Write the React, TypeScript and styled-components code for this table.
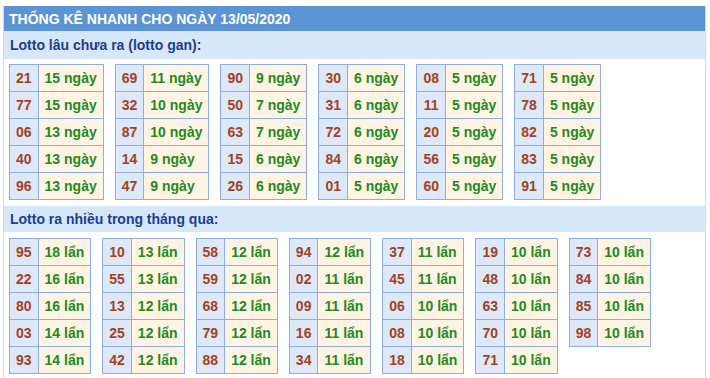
import React from "react";
import styled, { createGlobalStyle } from "styled-components";

const GlobalStyle = createGlobalStyle`
  body {
    margin: 0;
    background: #ffffff;
    font-family: "Liberation Sans", Arial, sans-serif;
  }
`;

const Frame = styled.div`
  margin: 6px 0 0 3px;
  width: 701px;
  border: 1px solid #cdd9e8;
  border-top: none;
  border-bottom: none;
`;

const Header = styled.div`
  height: 25px;
  line-height: 26px;
  padding-left: 5px;
  background-color: #5b93d5;
  color: #ffffff;
  font-size: 14px;
  font-weight: bold;
`;

const SubHeader = styled.div<{ h: number }>`
  height: ${(p) => p.h}px;
  line-height: ${(p) => p.h}px;
  padding-left: 6px;
  background-color: #d6e7fa;
  color: #1c3e92;
  font-size: 14px;
  font-weight: bold;
`;

const TableRow = styled.div<{ top: number; bottom: number }>`
  display: flex;
  align-items: flex-start;
  gap: 11px;
  padding: ${(p) => p.top}px 5px ${(p) => p.bottom}px 5px;
`;

const Table = styled.table`
  border-collapse: collapse;
  font-size: 14px;
  font-weight: bold;
`;

const NumCell = styled.td`
  height: 26px;
  padding: 0 6px;
  border: 1px solid #8eaee0;
  background-color: #dde8f8;
  color: #a3421f;
  text-align: center;
`;

const ValueCell = styled.td`
  height: 26px;
  padding: 0 6px;
  border: 1px solid #8eaee0;
  background-color: #fff4e3;
  color: #228a22;
  white-space: nowrap;
`;

type Entry = [string, number];

const ganTables: Entry[][] = [
  [["21", 15], ["77", 15], ["06", 13], ["40", 13], ["96", 13]],
  [["69", 11], ["32", 10], ["87", 10], ["14", 9], ["47", 9]],
  [["90", 9], ["50", 7], ["63", 7], ["15", 6], ["26", 6]],
  [["30", 6], ["31", 6], ["72", 6], ["84", 6], ["01", 5]],
  [["08", 5], ["11", 5], ["20", 5], ["56", 5], ["60", 5]],
  [["71", 5], ["78", 5], ["82", 5], ["83", 5], ["91", 5]],
];

const hotTables: Entry[][] = [
  [["95", 18], ["22", 16], ["80", 16], ["03", 14], ["93", 14]],
  [["10", 13], ["55", 13], ["13", 12], ["25", 12], ["42", 12]],
  [["58", 12], ["59", 12], ["68", 12], ["79", 12], ["88", 12]],
  [["94", 12], ["02", 11], ["09", 11], ["16", 11], ["34", 11]],
  [["37", 11], ["45", 11], ["06", 10], ["08", 10], ["18", 10]],
  [["19", 10], ["48", 10], ["63", 10], ["70", 10], ["71", 10]],
  [["73", 10], ["84", 10], ["85", 10], ["98", 10]],
];

const StatTable = ({ rows, unit }: { rows: Entry[]; unit: string }) => (
  <Table>
    <tbody>
      {rows.map(([num, count]) => (
        <tr key={num}>
          <NumCell>{num}</NumCell>
          <ValueCell>
            {count} {unit}
          </ValueCell>
        </tr>
      ))}
    </tbody>
  </Table>
);

const App: React.FC = () => {
  return (
    <>
      <GlobalStyle />
      <Frame>
        <Header>THỐNG KÊ NHANH CHO NGÀY 13/05/2020</Header>

        <SubHeader h={28}>Lotto lâu chưa ra (lotto gan):</SubHeader>
        <TableRow top={5} bottom={6}>
          {ganTables.map((rows, i) => (
            <StatTable key={i} rows={rows} unit="ngày" />
          ))}
        </TableRow>

        <SubHeader h={26}>Lotto ra nhiều trong tháng qua:</SubHeader>
        <TableRow top={6} bottom={4}>
          {hotTables.map((rows, i) => (
            <StatTable key={i} rows={rows} unit="lẩn" />
          ))}
        </TableRow>
      </Frame>
    </>
  );
};

export default App;
